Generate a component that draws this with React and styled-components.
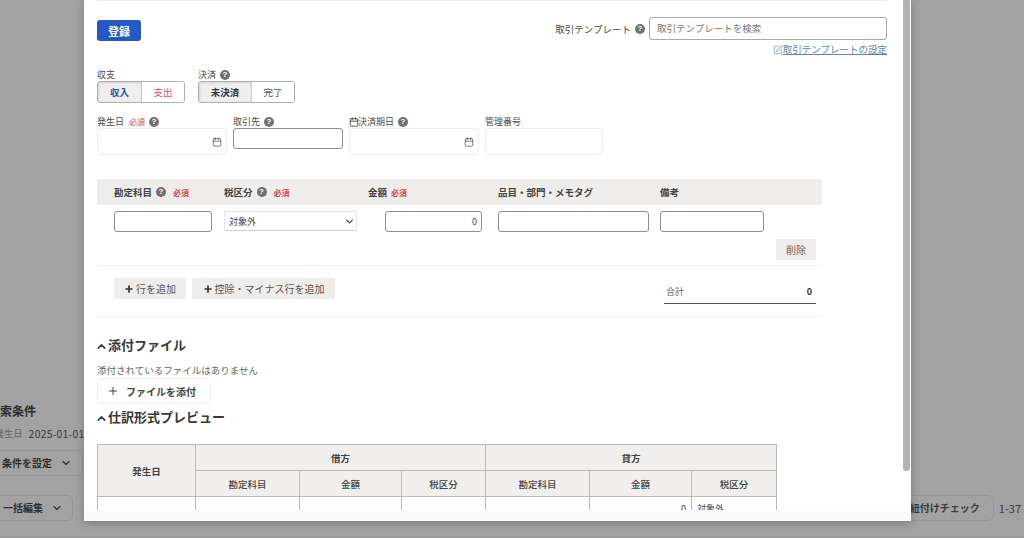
import React from 'react';
import styled, { createGlobalStyle } from 'styled-components';
import { Calendar, ChevronDown, ChevronUp, Plus, SquarePen } from 'lucide-react';

const GlobalStyle = createGlobalStyle`
    html, body {
        margin: 0;
        padding: 0;
    }
    body {
        font-family: "Noto Sans CJK JP", "Noto Sans", sans-serif;
        color: #333;
    }
    * {
        box-sizing: border-box;
    }
`;

const Page = styled.div`
    position: relative;
    width: 1024px;
    height: 538px;
    overflow: hidden;
    background: #a2a2a2;
    color: #2e2e2e;
`;

const Backdrop = styled.div`
    height: 538px;
    padding-top: 402px;
    border-bottom: 2px solid #9b9b9b;
`;

const SearchTitle = styled.div`
    margin-left: -12px;
    font-size: 12px;
    line-height: 17px;
    font-weight: 700;
`;

const SearchValue = styled.div`
    display: flex;
    align-items: center;
    gap: 6px;
    height: 21px;
    margin: 4px 0 0 -5px;
    font-size: 10.5px;
    letter-spacing: 0.2px;
    color: #3c3c3c;
    & > span {
        font-size: 9px;
        color: #666;
    }
`;

const DimButton = styled.div`
    display: inline-flex;
    align-items: center;
    justify-content: flex-end;
    gap: 8px;
    width: ${({ $width }) => $width}px;
    height: 26px;
    padding-right: ${({ $pad }) => $pad}px;
    border: 1px solid #969696;
    border-radius: 6px;
    font-size: 10px;
    font-weight: 700;
    white-space: nowrap;
`;

const SettingRow = styled.div`
    margin: 4px 0 0 -12px;
`;

const BulkRow = styled.div`
    display: flex;
    justify-content: space-between;
    align-items: center;
    margin: 19px 3px 0 -12px;
`;

const Paging = styled.div`
    display: flex;
    align-items: center;
    gap: 5px;
    font-size: 11px;
    color: #3c3c3c;
`;

const Modal = styled.div`
    position: absolute;
    top: 0;
    left: 84px;
    width: 827px;
    height: 521px;
    background: #fff;
    box-shadow: 0 2px 8px rgba(0, 0, 0, 0.25);
    overflow: hidden;
`;

const ModalBody = styled.div`
    height: 510px;
    padding-left: 13px;
    overflow: hidden;
`;

const ModalFooter = styled.div`
    height: 11px;
    background: #fafafa;
`;

const ScrollThumb = styled.div`
    position: absolute;
    top: 0;
    right: 1px;
    width: 7px;
    height: 471px;
    border-radius: 0 0 4px 4px;
    background: #b4b4b4;
`;

const TopRule = styled.div`
    width: 790px;
    height: 1px;
    background: #ececec;
`;

const TopRow = styled.div`
    display: flex;
    justify-content: space-between;
    width: 790px;
    height: 39px;
    margin-top: 16px;
`;

const SubmitButton = styled.button`
    width: 44px;
    height: 21px;
    margin-top: 3px;
    padding: 0;
    border: none;
    border-radius: 3px;
    background: #2458c6;
    color: #fff;
    font-family: inherit;
    font-size: 11px;
    font-weight: 700;
`;

const TemplateColumn = styled.div`
    display: flex;
    flex-direction: column;
    align-items: flex-end;
`;

const TemplateRow = styled.div`
    display: flex;
    align-items: center;
`;

const TemplateLabel = styled.span`
    font-size: 9.5px;
    color: #4a4a4a;
`;

const TemplateInput = styled.div`
    width: 238px;
    height: 23px;
    margin-left: 4px;
    padding-left: 7px;
    border: 1px solid #a8a8a8;
    border-radius: 3px;
    font-size: 9.5px;
    line-height: 21px;
    color: #777;
`;

const SettingLink = styled.a`
    display: flex;
    align-items: center;
    margin-top: 3px;
    font-size: 9.5px;
    line-height: 13px;
    color: #5a86b4;
    text-decoration: underline;
`;

const Help = styled.span`
    display: inline-flex;
    align-items: center;
    justify-content: center;
    flex: none;
    width: 10px;
    height: 10px;
    margin-left: 4px;
    border-radius: 50%;
    background: #707070;
    color: #fff;
    font-family: "Liberation Sans", sans-serif;
    font-size: 8px;
    font-weight: 700;
    line-height: 1;
`;

const Required = styled.span`
    margin-left: ${({ $gap }) => $gap || 5}px;
    font-size: 8px;
    font-weight: ${({ $bold }) => ($bold ? 700 : 400)};
    color: #d8434b;
`;

const ToggleRow = styled.div`
    display: flex;
    gap: 13px;
    margin-top: 13px;
`;

const ToggleGroup = styled.div`
    display: flex;
    flex-direction: column;
`;

const SmallLabel = styled.div`
    display: flex;
    align-items: center;
    height: 12px;
    font-size: 9px;
    line-height: 12px;
    color: #4a4a4a;
    white-space: nowrap;
    & > svg {
        margin-right: -1px;
    }
`;

const Segments = styled.div`
    display: flex;
    height: 22px;
    border: 1px solid #b0b0b0;
    border-radius: 3px;
    overflow: hidden;
`;

const Segment = styled.div`
    display: flex;
    align-items: center;
    justify-content: center;
    width: ${({ $width }) => $width}px;
    font-size: 9.5px;
    font-weight: ${({ $active }) => ($active ? 700 : 400)};
    color: ${({ $color }) => $color || '#555'};
    background: ${({ $active }) => ($active ? '#efeeec' : '#fff')};
    box-shadow: ${({ $active }) => ($active ? 'inset 1px 1px 2px #d0d0d0' : 'none')};
    & + & {
        border-left: 1px solid #c8c8c8;
    }
`;

const FieldRow = styled.div`
    display: flex;
    gap: 6px;
    margin-top: 13px;
`;

const Field = styled.div`
    display: flex;
    flex-direction: column;
    width: ${({ $width }) => $width}px;
`;

const SoftInput = styled.div`
    display: flex;
    align-items: center;
    justify-content: flex-end;
    height: 27px;
    padding-right: 4px;
    border: 1px solid #ececec;
    border-radius: 6px;
    color: #555;
`;

const HardInput = styled.div`
    width: ${({ $width }) => ($width ? `${$width}px` : '100%')};
    height: 21px;
    margin-left: ${({ $inset }) => $inset || 0}px;
    padding-right: 4px;
    border: 1px solid #8f8f8f;
    border-radius: 3px;
    font-size: 9px;
    line-height: 19px;
    text-align: right;
    color: #444;
    justify-self: ${({ $end }) => ($end ? 'end' : 'start')};
`;

const JOURNAL_COLUMNS = '110px 144px 114px 162px 120px';

const JournalHead = styled.div`
    display: grid;
    grid-template-columns: ${JOURNAL_COLUMNS};
    align-items: center;
    width: 725px;
    height: 26px;
    margin-top: 24px;
    padding-left: 17px;
    background: #eeedeb;
`;

const HeadCell = styled.div`
    display: flex;
    align-items: center;
    padding-left: ${({ $inset }) => $inset || 0}px;
    font-size: 9.5px;
    font-weight: 700;
    color: #444;
`;

const JournalLine = styled.div`
    display: grid;
    grid-template-columns: ${JOURNAL_COLUMNS};
    width: 725px;
    margin-top: 6px;
    padding-left: 17px;
`;

const TaxSelect = styled.div`
    display: flex;
    align-items: center;
    justify-content: space-between;
    width: 133px;
    height: 20px;
    padding: 0 1px 0 4px;
    border: 1px solid #e4e4e4;
    border-bottom-color: #cfcfcf;
    border-radius: 2px;
    font-size: 9px;
    color: #444;
`;

const DeleteRow = styled.div`
    display: flex;
    justify-content: flex-end;
    width: 719px;
    margin-top: 7px;
`;

const DeleteButton = styled.div`
    width: 40px;
    height: 21px;
    border-radius: 2px;
    background: #eeedeb;
    font-size: 10px;
    line-height: 21px;
    text-align: center;
    color: #666;
`;

const Divider = styled.div`
    width: 725px;
    height: 1px;
    margin-top: ${({ $top }) => $top || 0}px;
    background: #efefef;
`;

const ActionRow = styled.div`
    display: flex;
    justify-content: space-between;
    width: 719px;
    height: 50px;
    padding: 12px 0 0 17px;
`;

const AddButtons = styled.div`
    display: flex;
    gap: 6px;
`;

const AddButton = styled.div`
    display: flex;
    align-items: center;
    justify-content: center;
    gap: 2px;
    width: ${({ $width }) => $width}px;
    height: 21px;
    border-radius: 2px;
    background: #eeedeb;
    font-size: 10px;
    color: #555;
    & > svg {
        color: #333;
    }
`;

const Total = styled.div`
    display: flex;
    align-items: center;
    justify-content: space-between;
    width: 152px;
    height: 24px;
    margin-top: 2px;
    padding: 0 4px 0 2px;
    border-bottom: 1px solid #555;
    font-size: 9px;
    color: #666;
    & > b {
        font-size: 9px;
        color: #333;
    }
`;

const SectionTitle = styled.div`
    display: flex;
    align-items: center;
    height: 20px;
    margin-top: ${({ $top }) => $top}px;
    font-size: 13px;
    font-weight: 700;
    color: #3a3a3a;
    & > svg {
        flex: none;
        margin: 5px 0 0 -2px;
    }
`;

const EmptyNote = styled.div`
    height: 13px;
    margin-top: 10px;
    font-size: 9.5px;
    line-height: 13px;
    color: #666;
`;

const AttachButton = styled.div`
    display: flex;
    align-items: center;
    gap: 7px;
    width: 114px;
    height: 26px;
    margin-top: 1px;
    padding-left: 9px;
    border: 1px solid #ececec;
    border-radius: 6px;
    font-size: 10px;
    font-weight: 700;
    color: #444;
`;

const PreviewTable = styled.table`
    width: 679px;
    margin-top: 18px;
    border-collapse: collapse;
    table-layout: fixed;
    font-size: 9.5px;
    color: #444;
    th {
        height: 26px;
        padding: 0;
        border: 1px solid #bdbab6;
        background: #f1efed;
        font-weight: 500;
    }
    th.group {
        font-weight: 700;
    }
    td {
        height: 40px;
        padding: 5px 5px 0;
        border: 1px solid #bdbab6;
        vertical-align: top;
        font-size: 9px;
        line-height: 13px;
    }
    td.amount {
        text-align: right;
    }
`;

const DateInput = () => (
    <SoftInput>
        <Calendar size={10} strokeWidth={1.8} />
    </SoftInput>
);

const App = () => (
    <Page>
        <GlobalStyle />
        <Backdrop>
            <SearchTitle>検索条件</SearchTitle>
            <SearchValue>
                <span>発生日</span>2025-01-01
            </SearchValue>
            <SettingRow>
                <DimButton $width={95} $pad={10}>
                    条件を設定
                    <ChevronDown size={12} strokeWidth={2.2} />
                </DimButton>
            </SettingRow>
            <BulkRow>
                <DimButton $width={85} $pad={9}>
                    一括編集
                    <ChevronDown size={12} strokeWidth={2.2} />
                </DimButton>
                <Paging>
                    <DimButton $width={100} $pad={13}>紐付けチェック</DimButton>
                    1-37
                </Paging>
            </BulkRow>
        </Backdrop>
        <Modal>
            <ModalBody>
                <TopRule />
                <TopRow>
                    <SubmitButton>登録</SubmitButton>
                    <TemplateColumn>
                        <TemplateRow>
                            <TemplateLabel>取引テンプレート</TemplateLabel>
                            <Help>?</Help>
                            <TemplateInput>取引テンプレートを検索</TemplateInput>
                        </TemplateRow>
                        <SettingLink>
                            <SquarePen size={10} strokeWidth={1.6} />
                            取引テンプレートの設定
                        </SettingLink>
                    </TemplateColumn>
                </TopRow>
                <ToggleRow>
                    <ToggleGroup>
                        <SmallLabel>収支</SmallLabel>
                        <Segments>
                            <Segment $width={43} $active $color="#2458a8">
                                収入
                            </Segment>
                            <Segment $width={43} $color="#d8534b">
                                支出
                            </Segment>
                        </Segments>
                    </ToggleGroup>
                    <ToggleGroup>
                        <SmallLabel>
                            決済
                            <Help>?</Help>
                        </SmallLabel>
                        <Segments>
                            <Segment $width={52} $active $color="#333">
                                未決済
                            </Segment>
                            <Segment $width={43}>完了</Segment>
                        </Segments>
                    </ToggleGroup>
                </ToggleRow>
                <FieldRow>
                    <Field $width={130}>
                        <SmallLabel>
                            発生日
                            <Required>必須</Required>
                            <Help>?</Help>
                        </SmallLabel>
                        <DateInput />
                    </Field>
                    <Field $width={110}>
                        <SmallLabel>
                            取引先
                            <Help>?</Help>
                        </SmallLabel>
                        <HardInput />
                    </Field>
                    <Field $width={130}>
                        <SmallLabel>
                            <Calendar size={10} strokeWidth={2.2} />
                            決済期日
                            <Help>?</Help>
                        </SmallLabel>
                        <DateInput />
                    </Field>
                    <Field $width={118}>
                        <SmallLabel>管理番号</SmallLabel>
                        <SoftInput />
                    </Field>
                </FieldRow>
                <JournalHead>
                    <HeadCell>
                        勘定科目
                        <Help>?</Help>
                        <Required $gap={7} $bold>
                            必須
                        </Required>
                    </HeadCell>
                    <HeadCell>
                        税区分
                        <Help>?</Help>
                        <Required $gap={7} $bold>
                            必須
                        </Required>
                    </HeadCell>
                    <HeadCell>
                        金額
                        <Required $gap={4} $bold>
                            必須
                        </Required>
                    </HeadCell>
                    <HeadCell $inset={16}>品目・部門・メモタグ</HeadCell>
                    <HeadCell $inset={16}>備考</HeadCell>
                </JournalHead>
                <JournalLine>
                    <HardInput $width={98} />
                    <TaxSelect>
                        対象外
                        <ChevronDown size={11} strokeWidth={3} />
                    </TaxSelect>
                    <HardInput $width={97} $end>
                        0
                    </HardInput>
                    <HardInput $width={151} $inset={16} />
                    <HardInput $width={104} $inset={16} />
                </JournalLine>
                <DeleteRow>
                    <DeleteButton>削除</DeleteButton>
                </DeleteRow>
                <Divider $top={5} />
                <ActionRow>
                    <AddButtons>
                        <AddButton $width={72}>
                            <Plus size={10} strokeWidth={4} />
                            行を追加
                        </AddButton>
                        <AddButton $width={143}>
                            <Plus size={10} strokeWidth={4} />
                            控除・マイナス行を追加
                        </AddButton>
                    </AddButtons>
                    <Total>
                        合計
                        <b>0</b>
                    </Total>
                </ActionRow>
                <Divider />
                <SectionTitle $top={17}>
                    <ChevronUp size={13} strokeWidth={3} />
                    添付ファイル
                </SectionTitle>
                <EmptyNote>添付されているファイルはありません</EmptyNote>
                <AttachButton>
                    <Plus size={12} strokeWidth={2} />
                    ファイルを添付
                </AttachButton>
                <SectionTitle $top={2}>
                    <ChevronUp size={13} strokeWidth={3} />
                    仕訳形式プレビュー
                </SectionTitle>
                <PreviewTable>
                    <colgroup>
                        <col width="98" />
                        <col width="104" />
                        <col width="102" />
                        <col width="84" />
                        <col width="104" />
                        <col width="102" />
                        <col width="85" />
                    </colgroup>
                    <thead>
                        <tr>
                            <th rowSpan={2} className="group">発生日</th>
                            <th colSpan={3} className="group">借方</th>
                            <th colSpan={3} className="group">貸方</th>
                        </tr>
                        <tr>
                            <th>勘定科目</th>
                            <th>金額</th>
                            <th>税区分</th>
                            <th>勘定科目</th>
                            <th>金額</th>
                            <th>税区分</th>
                        </tr>
                    </thead>
                    <tbody>
                        <tr>
                            <td />
                            <td />
                            <td />
                            <td />
                            <td />
                            <td className="amount">0</td>
                            <td>対象外</td>
                        </tr>
                    </tbody>
                </PreviewTable>
            </ModalBody>
            <ModalFooter />
            <ScrollThumb />
        </Modal>
    </Page>
);

export default App;
